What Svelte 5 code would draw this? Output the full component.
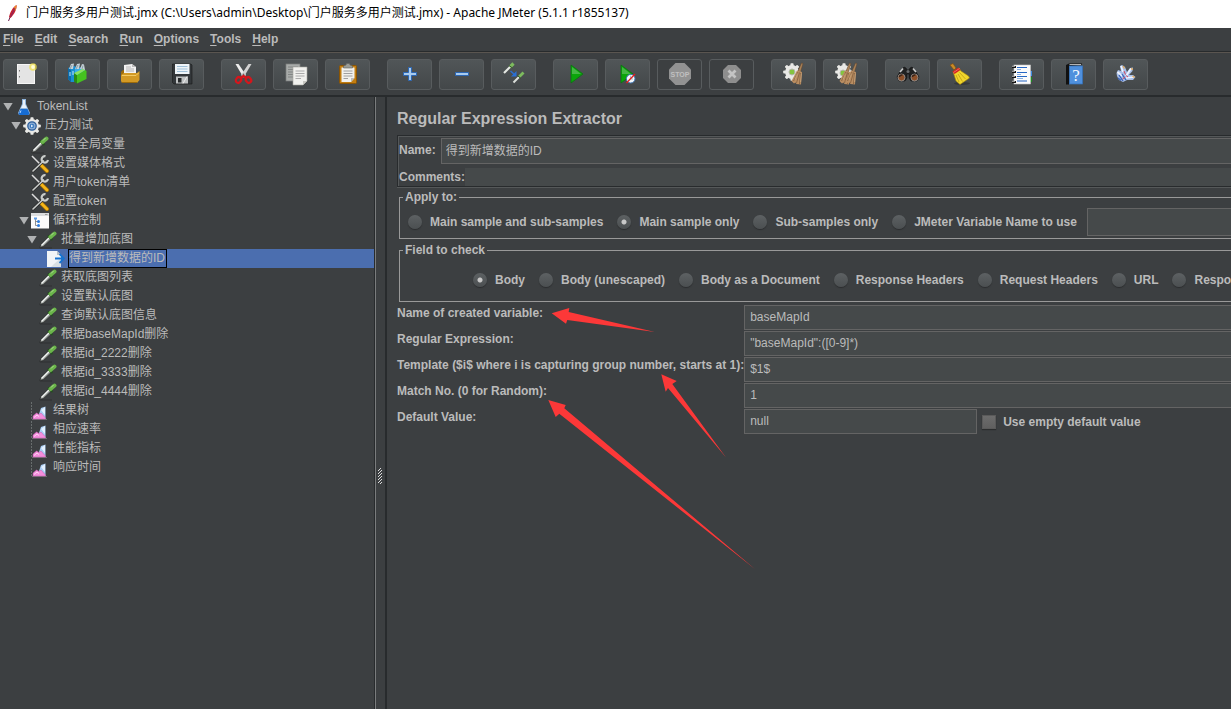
<script>
  const menus = ['File', 'Edit', 'Search', 'Run', 'Options', 'Tools', 'Help'];

  const toolGroups = [
    ['new', 'templates', 'open', 'save'],
    ['cut', 'copy', 'paste'],
    ['expand', 'collapse', 'toggle'],
    ['start', 'start no pauses', 'stop', 'shutdown'],
    ['clear', 'clear all'],
    ['search', 'reset search'],
    ['function helper', 'help', 'about']
  ];
  const disabledTools = ['stop', 'shutdown'];

  const tree = [
    { level: 0, icon: 'flask', text: 'TokenList', open: true },
    { level: 1, icon: 'gear', text: '压力测试', open: true },
    { level: 2, icon: 'dropper', text: '设置全局变量' },
    { level: 2, icon: 'tools', text: '设置媒体格式' },
    { level: 2, icon: 'tools', text: '用户token清单' },
    { level: 2, icon: 'tools', text: '配置token' },
    { level: 2, icon: 'loop', text: '循环控制', open: true },
    { level: 3, icon: 'dropper', text: '批量增加底图', open: true },
    { level: 4, icon: 'extract', text: '得到新增数据的ID' },
    { level: 3, icon: 'dropper', text: '获取底图列表' },
    { level: 3, icon: 'dropper', text: '设置默认底图' },
    { level: 3, icon: 'dropper', text: '查询默认底图信息' },
    { level: 3, icon: 'dropper', text: '根据baseMapId删除' },
    { level: 3, icon: 'dropper', text: '根据id_2222删除' },
    { level: 3, icon: 'dropper', text: '根据id_3333删除' },
    { level: 3, icon: 'dropper', text: '根据id_4444删除' },
    { level: 2, icon: 'chart', text: '结果树' },
    { level: 2, icon: 'chart', text: '相应速率' },
    { level: 2, icon: 'chart', text: '性能指标' },
    { level: 2, icon: 'chart', text: '响应时间' }
  ];
  let selected = $state(8);

  const scopes = ['Main sample and sub-samples', 'Main sample only', 'Sub-samples only', 'JMeter Variable Name to use'];
  let scope = $state('Main sample only');

  const targets = ['Body', 'Body (unescaped)', 'Body as a Document', 'Response Headers', 'Request Headers', 'URL', 'Response Code'];
  let target = $state('Body');

  const fields = [
    { id: 'refname', label: 'Name of created variable:', value: 'baseMapId' },
    { id: 'regex', label: 'Regular Expression:', value: '"baseMapId":([0-9]*)' },
    { id: 'template', label: 'Template ($i$ where i is capturing group number, starts at 1):', value: '$1$' },
    { id: 'match', label: 'Match No. (0 for Random):', value: '1' },
    { id: 'default', label: 'Default Value:', value: 'null', empty: true }
  ];
  const teeth = [0, 45, 90, 135, 180, 225, 270, 315];
</script>

{#snippet broom(x)}
  <g transform="translate({x} 0)">
    <path d="M19.500 1 21 1.500 18.500 10 16 9z" fill="#a98258" stroke="#5e432b" stroke-width=".5" />
    <path d="M15 8.500 20 10 19 22.500 14.500 22 13.500 20.500 12 21.500 9.500 19z" fill="#b98d61" />
    <path d="M16 10 11.500 19M17.500 10.500 14.500 21M18.500 11 17.500 22" stroke="#79573a" stroke-width=".7" fill="none" />
    <path d="M15.500 11.500 13 17.500M19.300 11.500 18.600 20" stroke="#d9b58a" stroke-width=".6" fill="none" />
  </g>
{/snippet}

{#snippet cog(cx, cy, s)}
  <g transform="translate({cx} {cy}) scale({s})">
    {#each teeth as t}
      <rect x="-1.600" y="-8.800" width="3.200" height="4" rx=".8" fill="#e9e9e6" transform="rotate({t})" />
    {/each}
    <circle r="6.900" fill="#e9e9e6" />
  </g>
{/snippet}

{#snippet toolIcon(name)}
  <svg width="25" height="25" viewBox="0 0 25 25" aria-hidden="true">
    {#if name === 'new'}
      <rect x="4.500" y="2.500" width="17" height="19" fill="#e4e4e4" stroke="#f6f6f6" />
      <path d="M6.500 8v1.500M6.500 14v1.500" stroke="#777" />
      <circle cx="20" cy="5" r="3.800" fill="#efe04f" opacity=".75" />
      <circle cx="20" cy="5" r="1.900" fill="#fffdd8" />
    {:else if name === 'templates'}
      <path d="M3 6 10 4 13 7V20L6 20 3 17z" fill="#1a8fd2" />
      <path d="M3 6 6 8V20L3 17z" fill="#0d6aa8" />
      <path d="M10 7 17 5 20 8V13H10z" fill="#39aee8" />
      <path d="M4 7 6 2 9 1.500 8 7zM10 7 12 2 15 1.500 14 7zM15 7 17 2 19 2.500 20 8z" fill="#c7d2d8" />
      <path d="M5 7 7 3M11 7 13 3M17 7 18 3.500" stroke="#6f8791" stroke-width=".7" />
      <path d="M5 10v4M8 9v4" stroke="#bde6fa" />
      <path d="M9 11 12 13V21.500L9 19.500z" fill="#2b8a12" />
      <path d="M12 13 20 8 21.500 9V17L12 21.500z" fill="#45c21f" />
      <path d="M9 11 17.500 7 20 8 12 13z" fill="#8be25e" />
    {:else if name === 'open'}
      <path d="M4 10 6 8H9V19H4z" fill="#9c6b0b" />
      <path d="M7 3 15 2 19 5V13H7z" fill="#f2f2f2" />
      <path d="M15 2V5H19z" fill="#bbb" />
      <path d="M9 5h5M9 7h8M9 9h8" stroke="#a5a5a5" stroke-width=".8" />
      <path d="M4 13 7 11H20L22.500 9V18L20 21H5L4 19z" fill="#d39a25" />
      <path d="M5 13.500H19L21.500 11" stroke="#f3ca62" fill="none" />
      <path d="M5 20.500H20" stroke="#9c6b0b" />
    {:else if name === 'save'}
      <path d="M4 2H22L23 3V22H5L3.500 20.500V2z" fill="#33373a" stroke="#17191a" stroke-width=".6" />
      <rect x="6" y="2" width="14.500" height="10" fill="#eef4f8" />
      <path d="M8 4.500H18.500M8 7H18.500M8 9.500H18.500" stroke="#9fc0d8" />
      <rect x="7" y="14.500" width="12" height="7" fill="#bfc2c3" />
      <rect x="9" y="16" width="3.500" height="4.500" fill="#25282a" />
      <path d="M14 21.500 18 14.500" stroke="#eee" />
    {:else if name === 'cut'}
      <path d="M4.500 2 7.500 2 15 13 12.500 15.500z" fill="#ededed" />
      <path d="M20.500 2 17.500 2 10 13 12.500 15.500z" fill="#d3d3d3" />
      <circle cx="12.500" cy="12.500" r=".9" fill="#666" />
      <ellipse cx="7.500" cy="18" rx="2.500" ry="3" fill="none" stroke="#d5161c" stroke-width="2.200" transform="rotate(35 7.500 18)" />
      <ellipse cx="17.500" cy="18" rx="2.500" ry="3" fill="none" stroke="#d5161c" stroke-width="2.200" transform="rotate(-35 17.500 18)" />
      <path d="M9 16.500 12.500 14 16 16.500" stroke="#d5161c" stroke-width="2.500" fill="none" />
    {:else if name === 'copy'}
      <rect x="3" y="2" width="14" height="17" fill="#a8aba9" stroke="#7c7f7e" stroke-width=".7" />
      <path d="M5 5H15M5 7.500H15M5 10H10M5 12.500H10M5 15H10" stroke="#828584" />
      <path d="M10 5H24V19L20 23H10z" fill="#f1f1ee" stroke="#a5a5a0" stroke-width=".6" />
      <path d="M12.500 9H21.500M12.500 11.500H21.500M12.500 14H21.500M12.500 16.500H18" stroke="#aaa" />
      <path d="M20 23V19H24z" fill="#c7c7c2" />
    {:else if name === 'paste'}
      <rect x="4.500" y="3.500" width="17" height="18" rx="1" fill="#c17d11" stroke="#8a5505" />
      <path d="M6.500 5.500H19.500V16L16 20H6.500z" fill="#f1f1ee" />
      <path d="M8.500 9H17.500M8.500 11.500H17.500M8.500 14H17.500M8.500 16.500H13" stroke="#a0a0a0" />
      <path d="M16 20V16H19.500z" fill="#bbb" />
      <path d="M8.500 6V4L11 3 11.500 1.500H14.500L15 3 17.500 4V6z" fill="#9a9c96" stroke="#5f615c" stroke-width=".6" />
    {:else if name === 'expand'}
      <path d="M11.500 5.500H14.500V10.500H19.500V13.500H14.500V18.500H11.500V13.500H6.500V10.500H11.500z" fill="#a8cbef" stroke="#2c67b4" />
    {:else if name === 'collapse'}
      <path d="M6.500 10.500H19.500V13.500H6.500z" fill="#a8cbef" stroke="#2c67b4" />
    {:else if name === 'toggle'}
      <path d="M3 11 9.500 4.500" stroke="#e5e8e3" stroke-width="2.200" />
      <path d="M9 5 12.500 1.500" stroke="#7dbb5e" stroke-width="3.200" />
      <path d="M8 3.500 11.500 6" stroke="#35562a" stroke-width="1" />
      <path d="M12.500 20.500 18 15" stroke="#dcdfdb" stroke-width="2" />
      <path d="M18 15 22.500 10.500" stroke="#7dbb5e" stroke-width="2.800" />
      <path d="M16.500 13.500 20 16.500" stroke="#35562a" stroke-width="1" />
      <path d="M9.500 9 14 13" stroke="#2a6fd4" stroke-width="1.500" />
      <path d="M15.500 9V14.500H10z" fill="#2a6fd4" />
    {:else if name === 'start'}
      <path d="M8 3 20 12 8 21z" fill="#0ba50b" stroke="#0a7512" stroke-width=".8" />
      <path d="M9 5 18 12H9z" fill="#58bd58" opacity=".75" />
    {:else if name === 'start no pauses'}
      <path d="M6 3 18 12 6 21z" fill="#0ba50b" stroke="#0a7512" stroke-width=".8" />
      <path d="M7 5 16 12H7z" fill="#58bd58" opacity=".75" />
      <circle cx="15.700" cy="16.700" r="4.300" fill="#f4f7fb" stroke="#3c74b4" />
      <path d="M15.500 13.500V17H18" stroke="#8aa" fill="none" stroke-width=".7" />
      <path d="M11.500 21 20 12" stroke="#e02020" stroke-width="1.300" />
    {:else if name === 'stop'}
      <path d="M8.500 1H17.500L24 7.500V16.500L17.500 23H8.500L2 16.500V7.500z" fill="#929292" />
      <text x="13" y="15" text-anchor="middle" font-size="7" font-weight="700" font-family="Liberation Sans, sans-serif" fill="#c0c0c0">STOP</text>
    {:else if name === 'shutdown'}
      <path d="M9 3H17L22 8V16L17 21H9L4 16V8z" fill="#8e8e8e" />
      <path d="M9.500 8.500 16.500 15.500M16.500 8.500 9.500 15.500" stroke="#c4c4c4" stroke-width="2.800" />
    {:else if name === 'clear'}
      {@render cog(11, 10, 1)}
      <circle cx="11" cy="10" r="3" fill="#84c440" stroke="#b7b7b0" />
      {@render broom(1)}
    {:else if name === 'clear all'}
      {@render cog(11, 10, 1)}
      <circle cx="10" cy="11" r="3" fill="#84c440" stroke="#b7b7b0" />
      {@render broom(-3)}
      {@render broom(3)}
    {:else if name === 'search'}
      <path d="M6 8 9 5 11 6 12 8H14L15 6 17 5 20 8 24 15 22 19H16L14 16V12H12V16L10 19H4L2 15z" fill="#202121" stroke="#090909" stroke-width=".5" />
      <path d="M5 10 8 6.500M21 10 18 6.500" stroke="#c9caca" stroke-width="1.700" />
      <circle cx="13" cy="9.500" r="1.500" fill="#696b6c" />
      <circle cx="6.500" cy="15.500" r="3.500" fill="#8d5029" stroke="#999" stroke-width=".8" />
      <circle cx="19.500" cy="15.500" r="3.500" fill="#8d5029" stroke="#999" stroke-width=".8" />
      <path d="M4.500 15a2.500 2 0 0 1 3-2M17.500 15a2.500 2 0 0 1 3-2" stroke="#3b2418" stroke-width="1.500" fill="none" />
    {:else if name === 'reset search'}
      <ellipse cx="15" cy="21.500" rx="8" ry="1.500" fill="#252829" opacity=".5" />
      <path d="M3 3 6 1.500 9 6 7 8z" fill="#c98a26" stroke="#7a4c0c" stroke-width=".6" />
      <path d="M6 9.500 12 6 14 9 21.500 14 22.500 16 13 22.500 9 19z" fill="#f0d52c" stroke="#a18308" stroke-width=".6" />
      <path d="M9 13 12 20M11 12 15.500 19.500M12.500 10.500 18.500 17" stroke="#bf9d13" stroke-width=".8" />
      <path d="M5.500 9.500 11.500 5.500 13.500 8 7.500 12z" fill="#d42121" />
      <path d="M6.500 10.500 12.500 6.500" stroke="#f48d78" stroke-width=".7" />
    {:else if name === 'function helper'}
      <rect x="19" y="9" width="4" height="5" fill="#3d8be0" />
      <rect x="19" y="15" width="4" height="5" fill="#1d8f20" />
      <rect x="5" y="3" width="16.500" height="19" fill="#fbfbfb" stroke="#c5c5c5" stroke-width=".6" />
      <path d="M8 5.500H18M8 10.500H18M8 14.500H18M8 19H18" stroke="#2667c4" stroke-width="1.200" />
      <path d="M8 7.500H12M8 12.500H12M8 16.500H14" stroke="#8ab0e0" />
      <path d="M3 5H7M3 10H7M3 15H7M3 20H7" stroke="#151515" stroke-width="2" />
      <path d="M3 4.300H6M3 9.300H6M3 14.300H6M3 19.300H6" stroke="#ddd" stroke-width=".8" />
    {:else if name === 'help'}
      <path d="M5 3 8 1.500H21V2.500L8 4V22.500H5z" fill="#111" />
      <path d="M8.500 2.500H20" stroke="#ddd" stroke-width=".8" />
      <rect x="8.500" y="4" width="13" height="18" fill="#4f90dd" stroke="#3272be" stroke-width=".7" />
      <text x="15" y="19" text-anchor="middle" font-size="17" font-family="Liberation Serif, serif" fill="#f5f9ff">?</text>
    {:else if name === 'about'}
      <path d="M4 14 3.500 11 5 8 8 9 7 4 9 3 12 5 14 10 17 6 20 5.500 19.500 9 16 13 20 13 22.500 15 20 18 14 18 10 20 6 18z" fill="#a8bfe8" />
      <path d="M8 4 10 10M18 6.500 13 14M21 15 13 16M4.500 10 9 14" stroke="#eef3ff" stroke-width="1.700" />
      <path d="M6 13 10 19M9 12 13 18M5 16 8 18.500" stroke="#3b63b8" stroke-width="1.300" />
      <path d="M11 9 12.500 12.500M13 13.500 15 15M9.500 17 12 15" stroke="#d6455d" />
      <path d="M10 4 11.500 6.500M19.500 14 21.500 15.500M18.500 6 19.500 8" stroke="#e8a750" stroke-width="1.300" />
    {/if}
  </svg>
{/snippet}

{#snippet treeIcon(name)}
  <svg class="node-icon" width="18" height="18" viewBox="0 0 18 18" aria-hidden="true">
    {#if name === 'flask'}
      <path d="M7 1H11V6L15 15 14 17H4L3 15 7 6z" fill="#8fb4dc" />
      <path d="M8 2H10V6L12 10H6L8 6z" fill="#e9f1fa" />
      <path d="M5.500 11H12.500L14.500 15.500 13.500 17H4.500L3.500 15.500z" fill="#176cd2" />
      <path d="M6 12.500 5 15" stroke="#b7d8ff" />
    {:else if name === 'gear'}
      {@render cog(9, 9, 1)}
      <circle cx="9" cy="9" r="4.200" fill="#8fb0d6" stroke="#2d5f9c" stroke-width="1.300" />
      <circle cx="9" cy="9" r="2.300" fill="#3878bd" />
      <path d="M8 7.500 10.500 9 8 10.500z" fill="#dce9f7" />
    {:else if name === 'dropper'}
      <path d="M1 17H13" stroke="#2b2d2e" opacity=".7" />
      <path d="M.8 16.500 2 13.500 9.500 6 12 8.500 4.500 15.500z" fill="#8b908d" stroke="#222" stroke-width=".6" />
      <path d="M2.500 14.500 10 7" stroke="#f4f6f4" stroke-width="1.500" />
      <path d="M9 4.500 13.500 9" stroke="#24501e" stroke-width="2" />
      <path d="M11.500 6 15.500 2.500" stroke="#6bb54b" stroke-width="4" stroke-linecap="round" />
      <path d="M12 4.500 14.500 2" stroke="#b0dd94" />
    {:else if name === 'tools'}
      <path d="M1 1 10 10" stroke="#ddd" stroke-width="1.500" />
      <path d="M10.500 10.500 16 16" stroke="#9c6b00" stroke-width="4" stroke-linecap="round" />
      <path d="M10.500 10.500 16 16" stroke="#f4b51a" stroke-width="2.800" stroke-linecap="round" />
      <path d="M2 16 12.500 6" stroke="#222" stroke-width="2.600" stroke-linecap="round" />
      <path d="M2 16 12.500 6" stroke="#c9ccca" stroke-width="1.700" stroke-linecap="round" />
      <path d="M14.500 1.200A3.200 3.200 0 1 0 17 5" stroke="#c9ccca" stroke-width="2.200" fill="none" />
    {:else if name === 'loop'}
      <rect x="0" y="1.500" width="18" height="15" fill="#fbfbfb" />
      <rect x="0" y="1" width="18" height="3" fill="#dadcde" />
      <path d="M14 2.500H16.500" stroke="#999" />
      <path d="M4.500 7V13.500H7M4.500 9.500H7" stroke="#777" stroke-width=".8" fill="none" />
      <circle cx="7.500" cy="9.500" r="1.500" fill="#2f7ee0" />
      <circle cx="7.500" cy="13.500" r="1.500" fill="#2f7ee0" />
      <rect x="3" y="5.500" width="3" height="2" fill="#5c9be8" />
    {:else if name === 'extract'}
      <path d="M0 1H10L14 5V17H0z" fill="#f1f4f6" />
      <path d="M10 1V5H14z" fill="#b8c0c6" />
      <path d="M7 14 14 8V17H4z" fill="#c8d0d6" opacity=".6" />
      <path d="M8 8.500H16M12.500 4 17 8.500 12.500 13" stroke="#1773cf" stroke-width="1.800" fill="none" />
    {:else if name === 'chart'}
      <path d="M.5 0V17" stroke="#747879" stroke-width=".8" stroke-dasharray="2 1" />
      <path d="M1 17.500H16" stroke="#777" stroke-width=".8" />
      <path d="M8 12 10 6 14.500 4.500V17H8z" fill="#a9cdf4" />
      <path d="M10 8 14 5V13z" fill="#e3f1ff" />
      <path d="M2 17V14L5.500 11 8 12.500 10 11 14.500 16V17z" fill="#f48fdc" stroke="#c95bb4" stroke-width=".5" />
      <path d="M3 15.500 6 13 8 14.500" stroke="#ffd5f4" fill="none" />
    {/if}
  </svg>
{/snippet}

<div class="window">
  <header class="titlebar">
    <svg width="14" height="18" viewBox="0 0 14 18" aria-hidden="true">
      <path d="M2.500 17 5 11" stroke="#6b2150" />
      <path d="M3 13C4 8 7 3 10.500 1 11 5 8.500 10 4.500 14z" fill="#c8202f" />
      <path d="M8 3.500C9 2 10 1 10.500 1 10.500 3 10 6 9 7z" fill="#ee8a2a" />
      <path d="M4.500 13 9 4" stroke="#6e2a72" stroke-width=".8" />
    </svg>
    <span>门户服务多用户测试.jmx (C:\Users\admin\Desktop\门户服务多用户测试.jmx) - Apache JMeter (5.1.1 r1855137)</span>
  </header>

  <nav class="menubar">
    {#each menus as m}
      <button type="button"><u>{m[0]}</u>{m.slice(1)}</button>
    {/each}
  </nav>

  <div class="toolbar">
    {#each toolGroups as group}
      <div class="tool-group">
        {#each group as tool}
          <button type="button" aria-label={tool} disabled={disabledTools.includes(tool)}>{@render toolIcon(tool)}</button>
        {/each}
      </div>
    {/each}
  </div>

  <div class="workspace">
    <ul class="tree" role="tree">
      {#each tree as node, i}
        <li role="treeitem" aria-selected={selected === i}>
          <button type="button" class="node level-{node.level}" class:selected={selected === i} onclick={() => (selected = i)}>
            <span class="arrow" class:open={node.open}></span>
            {@render treeIcon(node.icon)}
            <span class="node-text">{node.text}</span>
          </button>
        </li>
      {/each}
    </ul>

    <div class="splitter">
      <svg width="4" height="16" viewBox="0 0 4 16" aria-hidden="true">
        <path d="M2.500 0V16" stroke="#ddd" stroke-dasharray="1 2" />
        <path d="M1.500 1V16" stroke="#ddd" stroke-dasharray="1 2" />
        <path d="M.5 2V16M3.500 2V16" stroke="#ddd" stroke-dasharray="1 2" />
      </svg>
    </div>

    <main class="editor">
      <h1>Regular Expression Extractor</h1>

      <div class="identity">
        <div class="name-row">
          <label for="name">Name:</label>
          <input id="name" type="text" value="得到新增数据的ID" />
        </div>
        <div class="comment-row">
          <label for="comments">Comments:</label>
          <input id="comments" type="text" />
        </div>
      </div>

      <fieldset class="scope">
        <legend>Apply to:</legend>
        <div class="options">
          {#each scopes as s}
            <label><input type="radio" name="scope" value={s} bind:group={scope} />{s}</label>
          {/each}
          <input class="variable" type="text" aria-label="JMeter Variable Name" />
        </div>
      </fieldset>

      <fieldset class="target">
        <legend>Field to check</legend>
        <div class="options">
          {#each targets as t}
            <label><input type="radio" name="target" value={t} bind:group={target} />{t}</label>
          {/each}
        </div>
      </fieldset>

      <div class="form">
        {#each fields as f}
          <label for={f.id}>{f.label}</label>
          <div class="cell">
            <input id={f.id} type="text" class:short={f.empty} value={f.value} />
            {#if f.empty}
              <label class="check"><input type="checkbox" />Use empty default value</label>
            {/if}
          </div>
        {/each}
      </div>
    </main>
  </div>

  <svg class="pointers" width="230" height="280" viewBox="540 300 230 280" aria-hidden="true">
    <path d="M551.700 313.300 569.300 308 568.700 312 655 332 567.300 320 566 323.700z" />
    <path d="M661.300 374.300 676.700 381 672.300 384 726 457.500 668 388 665.700 391.700z" />
    <path d="M548.300 400 565.700 405 564.300 408.300 755.500 569.500 559.300 413.700 555.700 417z" />
  </svg>
</div>

<style>
  :global(body) {
    margin: 0;
    background: #3c3f41;
  }
  .window {
    position: relative;
    display: flex;
    flex-direction: column;
    min-height: 100vh;
    overflow: hidden;
    background: #3c3f41;
    color: #bbb;
    font: 12px/16px 'Liberation Sans', 'Noto Sans CJK SC', sans-serif;
  }
  button,
  input {
    box-sizing: border-box;
    margin: 0;
    font: inherit;
    color: inherit;
  }
  .titlebar {
    display: flex;
    align-items: center;
    gap: 6px;
    height: 28px;
    padding: 0 6px 3px;
    box-sizing: border-box;
    background: #fff;
    color: #000;
    font-family: 'Noto Sans', 'Noto Sans CJK SC', sans-serif;
    white-space: nowrap;
  }
  .menubar {
    display: flex;
    gap: 11px;
    height: 23px;
    padding-left: 3px;
    border-bottom: 1px solid #282b2d;
    box-shadow: 0 1px #5a5550;
  }
  .menubar button {
    padding: 0 0 2px;
    border: 0;
    background: none;
    font-weight: 700;
  }
  .menubar u {
    text-underline-offset: 2px;
  }
  .toolbar {
    display: flex;
    gap: 17px;
    padding: 7px 3px 5px;
    border-bottom: 2px solid #282b2d;
  }
  .tool-group {
    display: flex;
    gap: 7px;
  }
  .toolbar button {
    display: grid;
    place-items: center;
    width: 45px;
    height: 31px;
    padding: 0;
    border: 1px solid #585c5e;
    border-radius: 3px;
    background: linear-gradient(#515658, #434749);
  }
  .toolbar button:disabled {
    background: none;
  }
  .workspace {
    display: flex;
    flex: 1;
  }
  .tree {
    flex: 0 0 374px;
    margin: 0;
    padding: 0;
    border-right: 1px solid #282b2d;
    box-shadow: 1px 0 #7a7c7d;
    list-style: none;
  }
  .node {
    display: flex;
    align-items: center;
    width: 100%;
    height: 19px;
    padding: 0;
    border: 0;
    background: none;
    white-space: nowrap;
  }
  .level-0 { padding-left: 3px; }
  .level-1 { padding-left: 11px; }
  .level-2 { padding-left: 19px; }
  .level-3 { padding-left: 27px; }
  .level-4 { padding-left: 35px; }
  .selected {
    background: #4b6eaf;
  }
  .arrow {
    width: 10px;
    height: 8px;
    flex: none;
  }
  .arrow.open {
    background: #b0b2b3;
    clip-path: polygon(0 0, 100% 0, 50% 100%);
  }
  .node-icon {
    flex: none;
    margin: 0 3px 0 2px;
  }
  .node-text {
    padding: 0 1px 1px 0;
    border: 1px solid transparent;
  }
  .selected .node-text {
    border-color: #000;
  }
  .splitter {
    display: flex;
    flex: 0 0 10px;
    align-items: center;
    justify-content: center;
    border-right: 2px solid #282b2d;
  }
  .splitter svg {
    margin-top: 146px;
  }
  .editor {
    flex: 1;
    min-width: 0;
    padding: 13px 0 0 10px;
    font-weight: 700;
    white-space: nowrap;
  }
  h1 {
    margin: 0 0 7px;
    font-size: 16px;
    line-height: 18px;
  }
  input[type='text'] {
    height: 26px;
    padding: 0 5px;
    border: 1px solid #646464;
    border-right: 0;
    border-radius: 0;
    outline: 0;
    background: #45494a;
    font-weight: 400;
  }
  .identity {
    display: flex;
    flex-direction: column;
    gap: 4px;
    padding: 2px 0 0 1px;
    border: 1px solid #282b2d;
    border-right: 0;
    box-shadow: inset 1px 1px #555859, 0 1px #555859;
  }
  .name-row,
  .comment-row {
    display: flex;
    align-items: center;
  }
  .name-row {
    gap: 5px;
  }
  .name-row label {
    padding-bottom: 2px;
  }
  .name-row input,
  .comment-row input {
    flex: 1;
    min-width: 0;
  }
  .name-row input[type='text'] {
    padding: 0 4px 3px;
  }
  .comment-row input[type='text'] {
    height: 18px;
    border: 0;
  }
  fieldset {
    min-width: 0;
    margin: 0 0 0 2px;
    padding: 0;
    border: 1px solid #999;
    border-right: 0;
  }
  legend {
    margin-left: 3px;
    padding: 0 2px;
  }
  .options {
    display: flex;
    align-items: center;
    gap: 14px;
    overflow: hidden;
  }
  .options label {
    display: flex;
    flex: none;
    align-items: center;
    gap: 8px;
  }
  .scope {
    margin-top: 2px;
  }
  .scope .options {
    height: 33px;
    padding-left: 8px;
  }
  .options .variable {
    flex: 1;
    min-width: 0;
    height: 28px;
    margin-left: -4px;
  }
  .target {
    margin-top: 3px;
  }
  .target .options {
    height: 43px;
    padding-left: 73px;
  }
  input[type='radio'],
  input[type='checkbox'] {
    flex: none;
    width: 14px;
    height: 14px;
    appearance: none;
    background: linear-gradient(#5d6163, #4b4f51);
    box-shadow: 0 1px 1px #2b2d2e;
  }
  input[type='radio'] {
    border-radius: 50%;
  }
  input[type='checkbox'] {
    border: 1px solid #5a5a5a;
    background: linear-gradient(#6c6c6c, #606060);
  }
  input[type='radio']:checked {
    background: radial-gradient(circle, #c8c8c8 2px, transparent 3px), linear-gradient(#5d6163, #4b4f51);
  }
  .form {
    display: grid;
    grid-template-columns: auto 1fr;
    margin-top: 3px;
  }
  .cell {
    display: flex;
    gap: 5px;
    height: 26px;
    align-items: flex-start;
  }
  .cell input[type='text'] {
    flex: 1;
    min-width: 0;
    height: 25px;
    padding-bottom: 1px;
  }
  .cell input.short[type='text'] {
    flex: 0 0 233px;
    border-right: 1px solid #646464;
  }
  .check {
    display: flex;
    align-items: center;
    gap: 7px;
    height: 24px;
    padding-top: 4px;
    box-sizing: border-box;
  }
  .check {
    height: 25px;
    padding-top: 0;
    padding-bottom: 0;
    line-height: 24px;
  }
  .pointers {
    position: absolute;
    left: 540px;
    top: 300px;
    fill: #fc3838;
    pointer-events: none;
  }
</style>
